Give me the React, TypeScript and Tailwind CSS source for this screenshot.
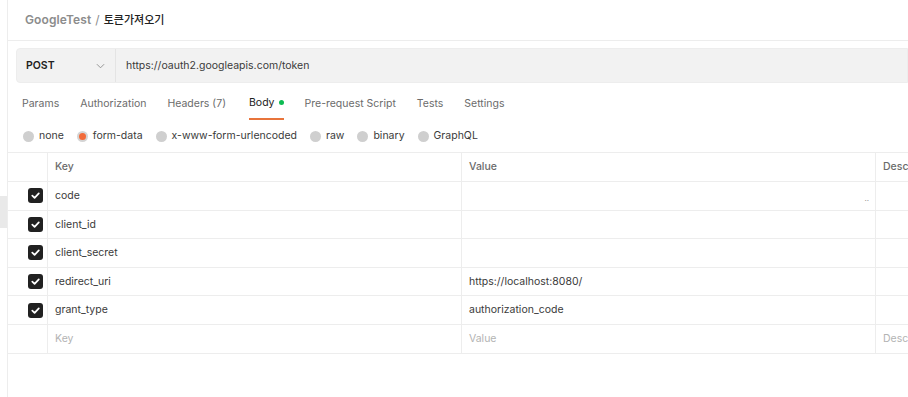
import React from 'react';

const rows = [
  { key: 'code', value: '', dots: true },
  { key: 'client_id', value: '' },
  { key: 'client_secret', value: '' },
  { key: 'redirect_uri', value: 'https://localhost:8080/' },
  { key: 'grant_type', value: 'authorization_code' },
];

const tabs = ['Params', 'Authorization', 'Headers (7)', 'Body', 'Pre-request Script', 'Tests', 'Settings'];
const bodyTypes = ['none', 'form-data', 'x-www-form-urlencoded', 'raw', 'binary', 'GraphQL'];

const Check = () => (
  <div className="w-[15px] h-[15px] rounded-[3px] bg-[#212121] flex items-center justify-center">
    <svg viewBox="0 0 12 12" className="w-[11px] h-[11px]">
      <path d="M2.5 6.2 L5 8.6 L9.6 3.6" fill="none" stroke="#fff" strokeWidth="1.9" strokeLinecap="round" strokeLinejoin="round" />
    </svg>
  </div>
);

export default function App() {
  return (
    <div
      className="w-[908px] h-[397px] bg-white flex overflow-hidden text-[10.5px] text-[#212121]"
      style={{ fontFamily: 'Inter, "Noto Sans CJK KR", sans-serif' }}
    >
      {/* left strip */}
      <div className="w-[8px] shrink-0 border-r border-[#ededed] flex flex-col">
        <div className="h-[196px]" />
        <div className="h-[32px] bg-[#e9e9e9]" />
      </div>

      <div className="flex-1 min-w-0 flex flex-col">
        {/* breadcrumb */}
        <div className="h-[41px] shrink-0 border-b border-[#ededed] flex items-center pl-[17px] gap-[3px] text-[12px]">
          <span className="text-[#8c8c8c] font-semibold tracking-[0.1px]">GoogleTest</span>
          <span className="text-[#8c8c8c] px-[1px]">/</span>
          <span className="text-[#212121] font-medium text-[11px]">토큰가져오기</span>
        </div>

        {/* url bar */}
        <div className="mt-[7px] ml-[8px] h-[35px] shrink-0 flex bg-[#f2f2f2] border border-[#ededed] rounded-l-[4px]">
          <div className="w-[99px] shrink-0 flex items-center justify-between pl-[9px] pr-[10px] border-r border-[#e4e4e4]">
            <span className="font-semibold text-[#212121]">POST</span>
            <svg viewBox="0 0 10 6" className="w-[9px] h-[6px]">
              <path d="M1 1 L5 5 L9 1" fill="none" stroke="#8c8c8c" strokeWidth="1" />
            </svg>
          </div>
          <div className="flex items-center pl-[10px] text-[#3a3a3a]">https://oauth2.googleapis.com/token</div>
        </div>

        {/* tabs */}
        <div className="h-[37px] shrink-0 flex items-end pl-[14px] gap-[21px]">
          {tabs.map((t) => (
            <div
              key={t}
              className={`h-[33px] flex items-center gap-[4px] ${
                t === 'Body' ? 'text-[#212121] border-b-2 border-[#e8743b] ml-[2px]' : 'text-[#6b6b6b]'
              }`}
            >
              <span>{t}</span>
              {t === 'Body' && <span className="w-[5px] h-[5px] rounded-full bg-[#0cbb52]" />}
            </div>
          ))}
        </div>

        {/* body types */}
        <div className="h-[32px] shrink-0 flex items-center pl-[15px] gap-[13px]">
          {bodyTypes.map((b) => (
            <div key={b} className="flex items-center gap-[5px] text-[#3a3a3a]">
              {b === 'form-data' ? (
                <span className="w-[11px] h-[11px] rounded-full bg-[#d4d4d4] flex items-center justify-center">
                  <span className="w-[7px] h-[7px] rounded-full bg-[#f26b3a]" />
                </span>
              ) : (
                <span className="w-[11px] h-[11px] rounded-full bg-[#cfcfcf]" />
              )}
              <span>{b}</span>
            </div>
          ))}
        </div>

        {/* table */}
        <div className="border-t border-[#ededed]">
          <div className="flex h-[29px] border-b border-[#ededed] font-medium text-[#6b6b6b]">
            <div className="w-[40px] shrink-0 border-r border-[#ededed]" />
            <div className="w-[414px] shrink-0 border-r border-[#ededed] flex items-center pl-[7px]">Key</div>
            <div className="w-[414px] shrink-0 border-r border-[#ededed] flex items-center pl-[7px]">Value</div>
            <div className="flex-1 flex items-center pl-[7px] whitespace-nowrap">Description</div>
          </div>
          {rows.map((r) => (
            <div key={r.key} className="flex h-[28.6px] border-b border-[#ededed] text-[#3a3a3a]">
              <div className="w-[40px] shrink-0 border-r border-[#ededed] flex items-center pl-[20px]">
                <Check />
              </div>
              <div className="w-[414px] shrink-0 border-r border-[#ededed] flex items-center pl-[7px]">{r.key}</div>
              <div className="w-[414px] shrink-0 border-r border-[#ededed] flex items-center justify-between pl-[7px] pr-[6px]">
                <span>{r.value}</span>
                {r.dots && <span className="text-[8px] text-[#8c8c8c] mt-[4px]">..</span>}
              </div>
              <div className="flex-1" />
            </div>
          ))}
          <div className="flex h-[28.6px] border-b border-[#ededed] text-[#b3b3b3]">
            <div className="w-[40px] shrink-0 border-r border-[#ededed]" />
            <div className="w-[414px] shrink-0 border-r border-[#ededed] flex items-center pl-[7px]">Key</div>
            <div className="w-[414px] shrink-0 border-r border-[#ededed] flex items-center pl-[7px]">Value</div>
            <div className="flex-1 flex items-center pl-[7px] whitespace-nowrap overflow-hidden">Description</div>
          </div>
        </div>
      </div>
    </div>
  );
}
